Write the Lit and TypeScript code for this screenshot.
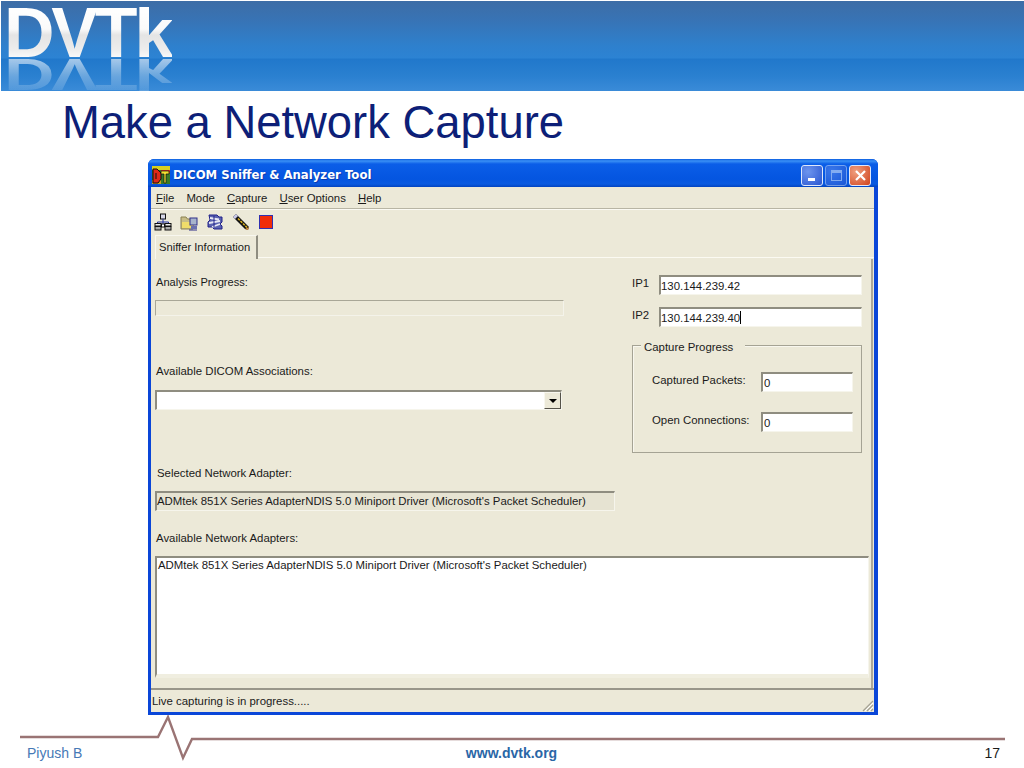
import { LitElement, html, css, svg } from "lit";
import { customElement } from "lit/decorators.js";

@customElement("app-root")
export class AppRoot extends LitElement {
  static styles = css`
    :host { display: block; width: 1024px; height: 768px; background: #fff; overflow: hidden; font-family: "Liberation Sans", Arial, sans-serif; position: relative; }
    .page { width: 1024px; height: 768px; display: flex; flex-direction: column; position: relative; }
    .banner { margin: 1px 0 0 1px; height: 90px; flex: none; position: relative; overflow: hidden;
      background: linear-gradient(180deg, #3d6da6 0, #3873b4 18px, #2e80cd 45px, #2c83d3 57px, #2178cb 58px, #2a80d0 75px, #3a8bd8 90px); }
    .logo-text, .logo-ref { position: absolute; left: 3px; top: 6px; height: 50px; font: 700 70px/50px "Liberation Sans", Arial, sans-serif; letter-spacing: -3.2px; white-space: nowrap; color: transparent; -webkit-background-clip: text; background-clip: text; padding: 1px 2px 0 0; }
    .logo-text { background-image: linear-gradient(180deg, #fff 0, #fafafa 22px, #e4e4e4 28px, #ececec 42px, #fafafa 51px); }
    .logo-ref { transform: scaleY(-.64); transform-origin: 50% 100%; background-image: linear-gradient(0deg, rgba(255,255,255,.62) 0, rgba(255,255,255,.3) 28px, rgba(255,255,255,.12) 51px); }
    h1 { margin: 5px 0 0 62px; font: 400 45.4px/54px "Liberation Sans", Arial, sans-serif; color: #0d1f78; flex: none; height: 63px; white-space: nowrap; }

    .win { margin-left: 148px; width: 730px; height: 556px; flex: none; box-sizing: border-box; display: flex; flex-direction: column; background: #0a46d8; border-radius: 6px 6px 0 0; padding: 0 4px 3px 3px; font-size: 11.4px; color: #1a1a1a; }
    .tbar { height: 28px; flex: none; display: flex; align-items: center; border-radius: 6px 6px 0 0; margin: 0 -4px 0 -3px; padding: 4px 7px 0 4px; box-sizing: border-box;
      background: linear-gradient(180deg, #0a5ce0 0, #3a90f5 2px, #0b5ee8 5px, #0455e0 20px, #0a5ae0 25px, #0244c0 28px); }
    .ticon { width: 18px; height: 18px; flex: none; }
    .ttext { margin-left: 3px; color: #fff; font: 700 11.7px "DejaVu Sans", sans-serif; flex: 1; text-shadow: 1px 1px 0 #0a3cb0; white-space: nowrap; }
    .btns { display: flex; gap: 2px; }
    .wbtn { width: 22px; height: 21px; box-sizing: border-box; border: 1px solid #dfe8fb; border-radius: 3px; display: flex; align-items: center; justify-content: center; background: radial-gradient(circle at 30% 30%, #6d95ee, #2a56d0); }
    .wbtn.dim { opacity: .5; }
    .wbtn.close { background: radial-gradient(circle at 30% 30%, #f0a080, #d0431c); }
    .body { flex: 1; background: #ece9d8; display: flex; flex-direction: column; min-height: 0; }
    .menu { height: 22px; flex: none; display: flex; align-items: center; gap: 12px; padding: 0 0 0 5px; border-bottom: 1px solid #b8b5a4; box-shadow: 0 1px 0 #fbfaf3; box-sizing: border-box; }
    .menu u { text-underline-offset: 1px; }
    .tools { height: 26px; flex: none; display: flex; align-items: center; gap: 8px; padding: 0 0 0 3px; box-sizing: border-box; }
    .tools svg { width: 18px; height: 18px; flex: none; }
    .tools .stop { width: 14px; height: 14px; margin-left: 1px; box-sizing: border-box; background: #f02c08; border: 1px solid #3030b0; }
    .tabs { height: 24px; flex: none; display: flex; padding-left: 4px; box-sizing: border-box; position: relative; }
    .tab { width: 103px; height: 24px; box-sizing: border-box; border-top: 1px solid #f8f7ef; border-left: 1px solid #f8f7ef; border-right: 2px solid #8f8d80; display: flex; align-items: center; padding: 0 0 1px 3px; background: #ece9d8; font-size: 11.2px; white-space: nowrap; }
    .rule { flex: 1; align-self: flex-end; height: 1px; background: #fbfaf2; margin-bottom: 1px; }
    .panel { flex: 1; min-height: 0; margin-right: 1px; border-right: 2px solid #aca899; padding: 0 4px 0 4px; display: flex; flex-direction: column; box-sizing: border-box; }
    .top { display: flex; height: 272px; flex: none; }
    .left { width: 477px; display: flex; flex-direction: column; flex: none; }
    .lbl { height: 14px; line-height: 14px; white-space: nowrap; padding-left: 1px; }
    .lbl.a { margin-top: 16px; font-size: 11.1px; }
    .lbl.b { margin-top: 48px; }
    .lbl.c { margin-top: 56px; padding-left: 2px; }
    .sunk { box-sizing: border-box; border-top: 2px solid #8f8d80; border-left: 2px solid #8f8d80; border-right: 1px solid #f6f5ec; border-bottom: 1px solid #f6f5ec; }
    .progress { width: 409px; height: 16px; margin-top: 11px; border-width: 1px; border-color: #a9a797 #f4f3ea #f4f3ea #a9a797; }
    .combo { width: 407px; height: 20px; margin-top: 12px; background: #fff; display: flex; justify-content: flex-end; align-items: stretch; }
    .arrow { width: 17px; background: #ece9d8; border-left: 1px solid #f8f7ef; border-top: 1px solid #f8f7ef; border-right: 1px solid #55534a; border-bottom: 1px solid #55534a; display: flex; align-items: center; justify-content: center; box-sizing: border-box; }
    .arrow i { width: 0; height: 0; border-left: 4px solid transparent; border-right: 4px solid transparent; border-top: 4px solid #000; }
    .adapter { width: 460px; height: 20px; margin-top: 11px; background: #e6e3d2; display: flex; align-items: center; padding: 0 0 2px 0; white-space: nowrap; }
    .right { flex: 1; position: relative; padding-top: 16px; }
    .iprow { display: flex; align-items: flex-start; height: 32px; }
    .iprow span { width: 27px; flex: none; line-height: 14px; margin-top: 1px; }
    .input { background: #fff; height: 20px; box-sizing: border-box; display: flex; align-items: center; white-space: nowrap; }
    .ip { width: 203px; }
    .caret { display: inline-block; width: 1px; height: 13px; background: #000; }
    .group { position: relative; box-sizing: border-box; width: 230px; height: 108px; margin-top: 6px; border: 1px solid #a5a394; box-shadow: 1px 1px 0 #f8f7ee inset; padding: 26px 0 0 19px; }
    .group b { position: absolute; left: 8px; top: -6px; font-weight: 400; background: #ece9d8; padding: 0 12px 0 3px; line-height: 14px; }
    .grow { display: flex; height: 40px; }
    .grow span { width: 109px; flex: none; line-height: 14px; padding-top: 1px; }
    .num { width: 92px; padding-left: 1px; }
    .list { width: 714px; height: 122px; margin-top: 11px; background: #fff; padding: 0 0 0 1px; white-space: nowrap; line-height: 14px; border-bottom: 4px solid #f0eee0; flex: none; }
    .status { height: 24px; flex: none; border-top: 2px solid #99968a; box-sizing: border-box; padding: 4px 0 0 1px; position: relative; line-height: 14px; margin-top: auto; }
    .grip { position: absolute; right: 0; bottom: 0; width: 13px; height: 13px; }

    .footer { flex: 1; position: relative; display: flex; justify-content: space-between; align-items: flex-end; padding: 0 24px 7px 27px; font-size: 14px; line-height: 16px; }
    .spark { position: absolute; left: 0; top: 0; width: 1024px; height: 53px; }
    .who { color: #4679b6; width: 196px; }
    .web { color: #2a66a6; font-weight: 700; }
    .pg { color: #1a1a1a; width: 200px; text-align: right; }
  `;

  private iconNet() {
    return html`<svg viewBox="0 0 18 18">
      <rect x="6.5" y="1" width="5" height="5" fill="#d8d8e8" stroke="#111"/>
      <path d="M9 6v3M3.5 9h11M3.5 9v2M14.5 9v2M9 9v2" stroke="#2030a0" fill="none"/>
      <rect x="1" y="10.5" width="6" height="2.5" fill="#eee" stroke="#111"/><rect x="1" y="13.5" width="6" height="3.5" fill="#aaa" stroke="#111"/>
      <rect x="11" y="10.5" width="6" height="2.5" fill="#eee" stroke="#111"/><rect x="11" y="13.5" width="6" height="3.5" fill="#aaa" stroke="#111"/>
      <rect x="7.5" y="11" width="3" height="3" fill="#fff" stroke="#111"/></svg>`;
  }
  private iconFolder() {
    return html`<svg viewBox="0 0 18 18">
      <path d="M1 4h5l1.5 2H13v10H1z" fill="#c8bd86" stroke="#8a8050"/>
      <path d="M2 9h8l3-2v8H2z" fill="#f0dc6a"/>
      <rect x="10" y="5" width="7" height="7" fill="#a8b4cc" stroke="#30308a"/>
      <path d="M11 13h6v3h-6z" fill="#6a70b0"/><path d="M9 17h8" stroke="#30308a"/></svg>`;
  }
  private iconGear() {
    return html`<svg viewBox="0 0 18 18">
      <path d="M3 2h8l2 2h3v5l-2 2 2 2v3H8l-2-2H2V9l2-2z" fill="#5a62b0" stroke="#20208a"/>
      <path d="M4 5l9 1.5M3 10l11-2M6 14l8-3" stroke="#e8e8f4" stroke-width="1.8"/>
      <path d="M8 3v11" stroke="#20208a"/></svg>`;
  }
  private iconPencil() {
    return html`<svg viewBox="0 0 18 18">
      <path d="M1 4l3-3 13 13-1 3-3-1z" fill="#111"/>
      <path d="M6 5.5l9 9" stroke="#d8b020" stroke-width="1.6" stroke-dasharray="2.5 1"/>
      <path d="M1 4l3-3 2 2-3 3z" fill="#c8c8e8"/>
      <path d="M17 14l-1 3-3-1z" fill="#d89040"/></svg>`;
  }

  render() {
    const line = svg`
      <polyline points="20,22 158,22 168,2 183,43 192,24 1005,24" fill="none" stroke="#9a7474" stroke-width="2.4" stroke-linejoin="miter"/>`;
    return html`<div class="page">
      <div class="banner">
        <span class="logo-text">DVTk</span>
        <span class="logo-ref" aria-hidden="true">DVTk</span>
      </div>
      <h1>Make a Network Capture</h1>

      <div class="win">
        <div class="tbar">
          <svg class="ticon" viewBox="0 0 18 18">
            <rect width="18" height="18" fill="#3a7a28"/>
            <path d="M0 0h18v4H0z" fill="#d8d020"/><path d="M9 4h9v3H9z" fill="#d03020"/><path d="M0 14h9v4H0z" fill="#c8a020"/>
            <path d="M1 3h4l4 4v6l-3 4H1zM4 7v6" fill="#e02818" stroke="#101010"/>
            <path d="M9 5h8v3h-3v9h-2V8H9z" fill="#f4e030" stroke="#101010" stroke-width=".7"/>
          </svg>
          <span class="ttext">DICOM Sniffer &amp; Analyzer Tool</span>
          <div class="btns">
            <div class="wbtn"><svg width="13" height="13" viewBox="0 0 13 13"><rect x="2" y="9" width="7" height="3" fill="#fff"/></svg></div>
            <div class="wbtn dim"><svg width="13" height="13" viewBox="0 0 13 13"><rect x="1.5" y="1.5" width="10" height="10" fill="none" stroke="#fff"/><rect x="1" y="1" width="11" height="3" fill="#fff"/></svg></div>
            <div class="wbtn close"><svg width="13" height="13" viewBox="0 0 13 13"><path d="M2 2l9 9M11 2l-9 9" stroke="#fff" stroke-width="2.2"/></svg></div>
          </div>
        </div>
        <div class="body">
          <div class="menu">
            <span><u>F</u>ile</span><span>Mode</span><span><u>C</u>apture</span><span><u>U</u>ser Options</span><span><u>H</u>elp</span>
          </div>
          <div class="tools">
            ${this.iconNet()}${this.iconFolder()}${this.iconGear()}${this.iconPencil()}<div class="stop"></div>
          </div>
          <div class="tabs"><div class="tab">Sniffer Information</div><div class="rule"></div></div>
          <div class="panel">
            <div class="top">
              <div class="left">
                <div class="lbl a">Analysis Progress:</div>
                <div class="sunk progress"></div>
                <div class="lbl b">Available DICOM Associations:</div>
                <div class="sunk combo"><div class="arrow"><i></i></div></div>
                <div class="lbl c">Selected Network Adapter:</div>
                <div class="sunk adapter">ADMtek 851X Series AdapterNDIS 5.0 Miniport Driver (Microsoft's Packet Scheduler)</div>
              </div>
              <div class="right">
                <div class="iprow"><span>IP1</span><div class="input sunk ip">130.144.239.42</div></div>
                <div class="iprow"><span>IP2</span><div class="input sunk ip">130.144.239.40<i class="caret"></i></div></div>
                <div class="group">
                  <b>Capture Progress</b>
                  <div class="grow"><span>Captured Packets:</span><div class="input sunk num">0</div></div>
                  <div class="grow"><span>Open Connections:</span><div class="input sunk num">0</div></div>
                </div>
              </div>
            </div>
            <div class="lbl">Available Network Adapters:</div>
            <div class="sunk list">ADMtek 851X Series AdapterNDIS 5.0 Miniport Driver (Microsoft's Packet Scheduler)</div>
          </div>
          <div class="status">Live capturing is in progress.....
            <svg class="grip" viewBox="0 0 13 13"><path d="M12 2L2 12M12 6l-6 6M12 10l-2 2" stroke="#a5a294" stroke-width="1.2"/><path d="M12 4l-8 8M12 8l-4 4" stroke="#fff" stroke-width="1"/></svg>
          </div>
        </div>
      </div>

      <div class="footer">
        <svg class="spark" viewBox="0 0 1024 53">${line}</svg>
        <span class="who">Piyush B</span><span class="web">www.dvtk.org</span><span class="pg">17</span>
      </div>
    </div>`;
  }
}
